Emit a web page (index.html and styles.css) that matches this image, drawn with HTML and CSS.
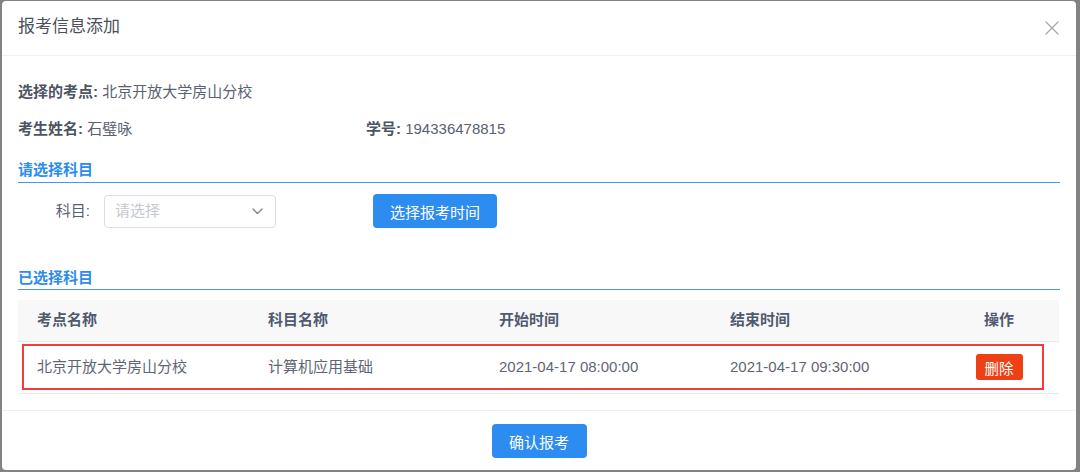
FILE: index.html
```html
<!DOCTYPE html>
<html lang="zh-CN">
<head>
<meta charset="utf-8">
<title>报考信息添加</title>
<link rel="stylesheet" href="styles.css">
</head>
<body>
<div class="dialog">
  <div class="dialog-header">
    <span class="dialog-title">报考信息添加</span>
    <svg class="close-icon" width="14" height="14" viewBox="0 0 14 14" aria-hidden="true">
      <path d="M1 1 L13 13 M13 1 L1 13" stroke="#a3a7ae" stroke-width="1.3" fill="none" stroke-linecap="round"/>
    </svg>
  </div>
  <div class="dialog-body">
    <div class="info-row">
      <span class="info"><b class="info-label">选择的考点:</b> 北京开放大学房山分校</span>
    </div>
    <div class="info-row">
      <span class="info info-name"><b class="info-label">考生姓名:</b> 石璧咏</span>
      <span class="info"><b class="info-label">学号:</b> 194336478815</span>
    </div>
    <div class="section-title">请选择科目</div>
    <div class="form-row">
      <label class="form-label">科目:</label>
      <div class="select">
        <span class="placeholder">请选择</span>
        <svg class="chevron" width="11" height="7" viewBox="0 0 11 7" aria-hidden="true">
          <polyline points="1,1 5.5,5.5 10,1" stroke="#808695" stroke-width="1.4" fill="none" stroke-linecap="round" stroke-linejoin="round"/>
        </svg>
      </div>
      <button class="btn btn-primary btn-time">选择报考时间</button>
    </div>
    <div class="section-title section-title-second">已选择科目</div>
    <div class="table-wrap">
      <table class="table">
        <colgroup>
          <col class="col-std">
          <col class="col-std">
          <col class="col-std">
          <col class="col-std">
          <col class="col-op">
        </colgroup>
        <thead>
          <tr>
            <th>考点名称</th>
            <th>科目名称</th>
            <th>开始时间</th>
            <th>结束时间</th>
            <th class="cell-center">操作</th>
          </tr>
        </thead>
        <tbody>
          <tr>
            <td>北京开放大学房山分校</td>
            <td>计算机应用基础</td>
            <td>2021-04-17 08:00:00</td>
            <td>2021-04-17 09:30:00</td>
            <td class="cell-center"><button class="btn btn-danger">删除</button></td>
          </tr>
        </tbody>
      </table>
      <div class="highlight"></div>
    </div>
  </div>
  <div class="dialog-footer">
    <button class="btn btn-primary btn-confirm">确认报考</button>
  </div>
</div>
</body>
</html>
```

FILE: styles.css
```css
* {
  box-sizing: border-box;
}

html, body {
  margin: 0;
  padding: 0;
  width: 1080px;
  height: 472px;
  overflow: hidden;
}

body {
  background: #828282;
  font-family: "Liberation Sans", "Noto Sans CJK SC", sans-serif;
  font-size: 15px;
  color: #515a6e;
}

.dialog {
  margin: 1px 0 0 2px;
  width: 1074px;
  height: 469px;
  background: #ffffff;
  border-radius: 4px;
  display: flex;
  flex-direction: column;
}

.dialog-header {
  height: 55px;
  padding: 0 17px 2px 16px;
  border-bottom: 1px solid #eef0f3;
  display: flex;
  align-items: center;
  justify-content: space-between;
}

.dialog-title {
  font-size: 17px;
  line-height: 22px;
  color: #4a505c;
}

.close-icon {
  display: block;
  margin-top: 1px;
}

.dialog-body {
  padding: 0 16px;
  flex: 1;
}

.info-row {
  display: flex;
  line-height: 20px;
  margin-top: 17px;
  color: #5a6170;
}

.info-row:first-child {
  margin-top: 26px;
}

.info-label {
  font-weight: bold;
  color: #4d5463;
}

.info-name {
  width: 348px;
}

.section-title {
  margin-top: 21px;
  font-size: 15px;
  font-weight: bold;
  line-height: 20px;
  color: #2d8cf0;
  padding-bottom: 2px;
  border-bottom: 1px solid #4a93ee;
}

.section-title-second {
  margin-top: 40px;
  padding-bottom: 1px;
}

.form-row {
  margin-top: 11px;
  height: 34px;
  display: flex;
  align-items: center;
}

.form-label {
  width: 86px;
  padding-right: 14px;
  text-align: right;
  color: #5a6170;
  line-height: 20px;
}

.select {
  width: 172px;
  height: 33px;
  border: 1px solid #dcdee2;
  border-radius: 4px;
  padding: 0 12px 0 10px;
  display: flex;
  align-items: center;
  justify-content: space-between;
}

.placeholder {
  color: #c5c8ce;
  line-height: 20px;
}

.chevron {
  display: block;
}

.btn {
  font-family: inherit;
  border: none;
  cursor: pointer;
  color: #ffffff;
  border-radius: 4px;
}

.btn-primary {
  background: #2d8cf0;
  height: 34px;
  padding: 0 17px;
  font-size: 15px;
}

.btn-time {
  margin-left: 97px;
  width: 124px;
}

.table-wrap {
  position: relative;
  margin-top: 10px;
  width: 1041px;
}

.table {
  width: 100%;
  border-collapse: collapse;
  table-layout: fixed;
}

.col-std {
  width: 231px;
}

.col-op {
  width: 117px;
}

.table th {
  height: 41px;
  background: #f8f8f9;
  border-bottom: 1px solid #e8eaec;
  text-align: left;
  padding: 0 0 0 19px;
  font-weight: bold;
  color: #515a6e;
  line-height: 20px;
}

.table td {
  height: 52px;
  border-bottom: 1px solid #e8eaec;
  padding: 0 0 0 19px;
  color: #5f6673;
  line-height: 20px;
  white-space: nowrap;
}

.table .cell-center {
  text-align: center;
  padding: 0 3px 0 0;
}

.btn-danger {
  background: #ed4014;
  height: 26px;
  width: 47px;
  padding: 0;
  font-size: 14.5px;
  border-radius: 3px;
  vertical-align: middle;
}

.highlight {
  position: absolute;
  left: 4px;
  top: 44px;
  width: 1022px;
  height: 46px;
  border: 2px solid #f43c3c;
  pointer-events: none;
}

.dialog-footer {
  height: 60px;
  border-top: 1px solid #eceef1;
  padding-top: 13px;
  display: flex;
  justify-content: center;
  align-items: flex-start;
}

.btn-confirm {
  width: 95px;
  padding: 0;
}
```
